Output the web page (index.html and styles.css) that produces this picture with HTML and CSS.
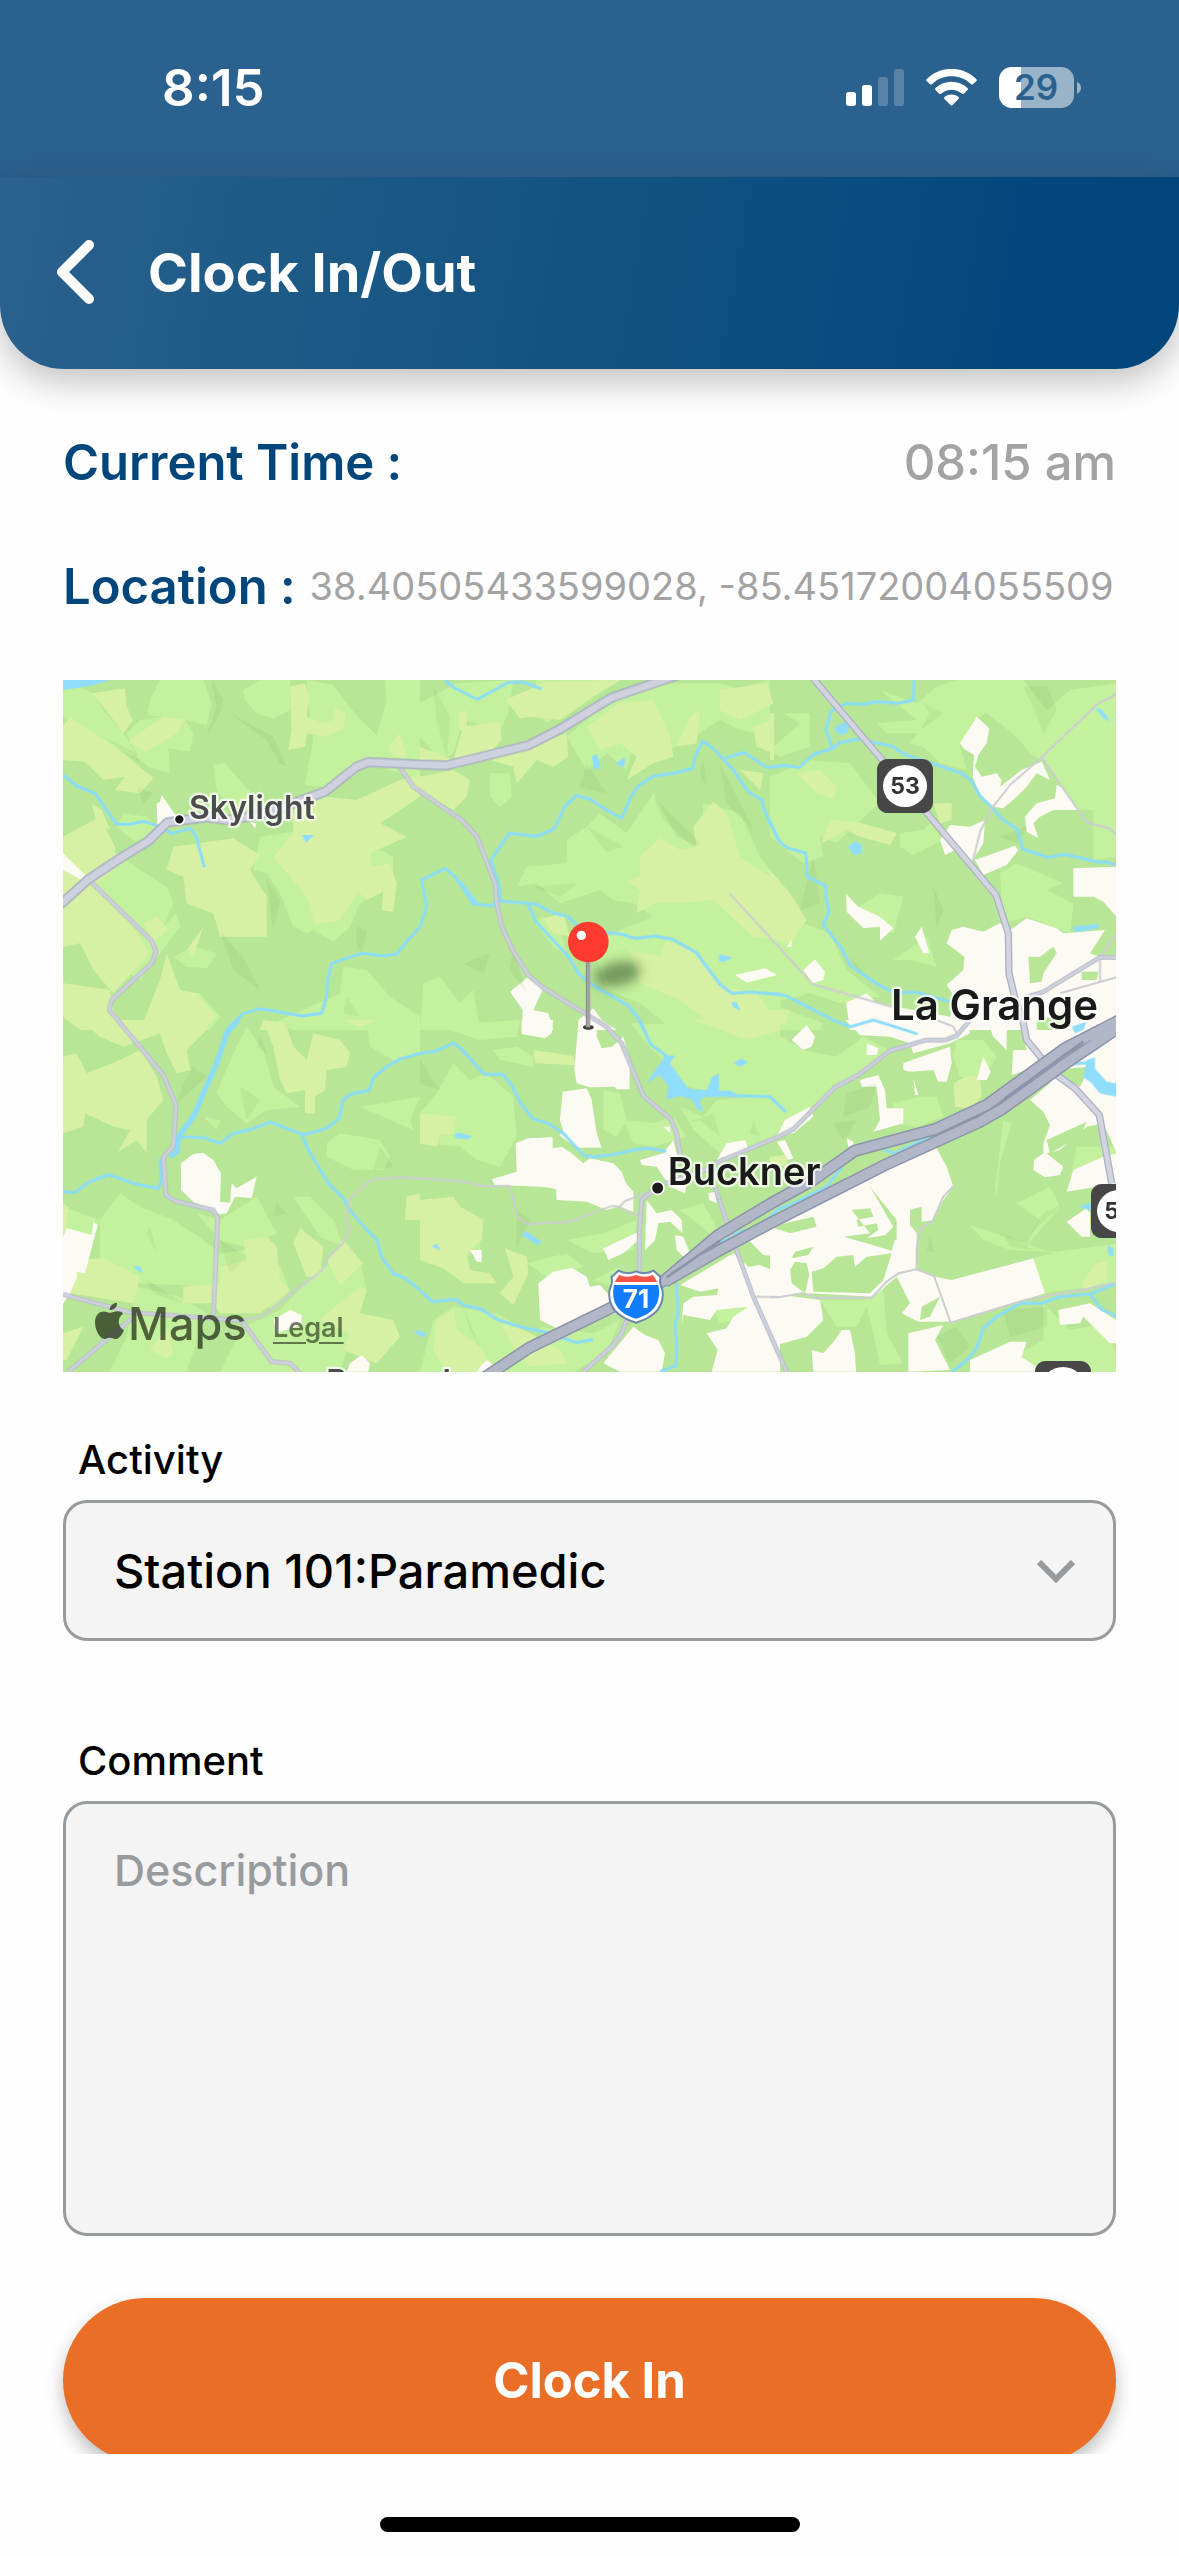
FILE: index.html
```
<!DOCTYPE html>
<html lang="en">
<head>
    <meta charset="UTF-8">
    <meta name="viewport" content="width=device-width, initial-scale=1.0">
    <title>Clock In/Out</title>
    <link rel="stylesheet" href="styles.css">
</head>
<body>
    <div class="app">
        <div class="status-bar">
            <span class="status-time">8:15</span>
            <div class="status-icons">
                <svg class="icon-signal" viewBox="78 57 174 111" fill="#fff" aria-hidden="true">
                    <rect x="78" y="126" width="30" height="42" rx="8"/>
                    <rect x="126" y="105" width="30" height="63" rx="8"/>
                    <rect x="174" y="81" width="30" height="87" rx="8" opacity=".22"/>
                    <rect x="222" y="57" width="30" height="111" rx="8" opacity=".22"/>
                </svg>
                <svg class="icon-wifi" viewBox="318 57 152 111" fill="#fff" aria-hidden="true">
                    <path d="M319 88C360 46 428 46 469 88Q471 91 469 93L458 103Q455 105 452 102C420 71 368 71 336 102Q333 105 330 103L319 93Q317 91 319 88Z"/>
                    <path d="M346 114C373 89 415 89 442 114Q445 117 442 120L431 131Q428 133 425 131C407 115 381 115 363 131Q360 133 357 131L346 120Q343 117 346 114Z"/>
                    <path d="M373 141C385 131 403 131 415 141Q418 144 415 147L397 165Q394 168 391 165L373 147Q370 144 373 141Z"/>
                </svg>
                <svg class="icon-battery" viewBox="537 51 246 123" aria-label="Battery 29%">
                    <defs>
                        <linearGradient id="charge">
                            <stop offset=".29" stop-color="#fff"/>
                            <stop offset=".29" stop-color="#fff" stop-opacity=".52"/>
                        </linearGradient>
                    </defs>
                    <rect x="537" y="51" width="225" height="123" rx="38" fill="url(#charge)"/>
                    <path d="M771 95Q783 101 783 113T771 131Z" fill="#fff" opacity=".52"/>
                    <text class="battery-text" x="648" y="150">29</text>
                </svg>
            </div>
        </div>

        <header class="header">
            <button class="back" type="button" aria-label="Back">
                <svg viewBox="0 0 38 64" fill="none" stroke="#fff" stroke-width="10" stroke-linecap="round" stroke-linejoin="round">
                    <path d="M33 5L6 32L33 59"/>
                </svg>
            </button>
            <h1 class="title">Clock In/Out</h1>
        </header>

        <main class="content">
            <div class="row">
                <span class="row-label">Current Time :</span>
                <span class="row-time">08:15 am</span>
            </div>
            <div class="row">
                <span class="row-label">Location :</span>
                <span class="row-coords">38.40505433599028, -85.45172004055509</span>
            </div>

            <div class="map">
                <svg class="map-canvas" viewBox="0 0 3159 2076" preserveAspectRatio="xMidYMid slice" role="img" aria-label="Map around Buckner">
                    <defs>
                        <filter id="soft" x="-50%" y="-100%" width="200%" height="300%"><feGaussianBlur stdDeviation="18"/></filter>
                        <g id="route-sign">
                            <rect width="168" height="162" rx="32" fill="#474747"/>
                            <ellipse cx="84" cy="81" rx="66" ry="63" fill="#fff"/>
                        </g>
                    </defs>
                    <rect width="3159" height="2076" fill="#b8e697"/>

                    <!-- fields, every layer is drawn as 3 x 2 tiles -->
                    <g class="light">
                        <path transform="translate(-9 -30)" d="M300 30L270 90L262 135L310 140L240 150L200 190L240 270L265 290L330 310L325 235L390 245L400 190L375 150L440 165L455 100L430 30ZM550 60L600 30H690V120L640 145L590 130L555 90ZM740 30L820 45L860 100L950 195L980 90L975 30H1080V330L960 290L930 270L880 320L790 350L735 345L760 210L750 140ZM460 285L495 280L520 310L585 380L520 420L470 360ZM9 60L60 50L100 70L130 120L200 200L240 270L200 250L100 200L9 140ZM100 520L160 540L240 600L320 650L340 700L360 770L300 850L240 930L160 880L60 700ZM600 500L800 470L920 520L1000 560L990 700L960 660L900 700L870 770L820 815L760 780L740 790L700 770L660 670L620 610L580 600ZM340 860L400 830L470 850L440 895L380 890ZM850 890L920 900L990 980L1080 1040V1080H700L640 1060L840 970ZM350 970L420 970L480 1040L450 1080H350ZM190 430L260 440L290 470L230 520L170 470Z"/>
                        <path transform="translate(1071 -30)" d="M110 40L280 30L270 100L260 140L240 180L130 150L100 250L60 270L0 200V100ZM350 30H560L440 120L380 160L340 110ZM600 90L740 40L900 40L1040 80L1060 200L960 180L900 150L820 200L750 240L700 130L560 170L640 230L620 300L560 250L500 300L440 200L520 130ZM210 310L270 310L275 380L240 412L210 380ZM440 510L500 470L540 430L620 490L700 370L770 500L840 530L850 400L960 430L1020 560L1080 640V1080H760L660 1000L560 960L520 830L600 780L700 740L640 700L580 690L540 660L420 700L350 640L290 650L320 590L440 580ZM930 60L1050 30V170L990 180ZM370 740L420 770L440 860L400 830L340 750ZM10 940L60 920L120 1000L160 960L180 1080H0Z"/>
                        <path transform="translate(2121 -30)" d="M0 240L90 160L40 130L120 130L120 230L30 260ZM330 60L440 100L500 50L560 30L580 130L520 190L350 190L320 160L440 150ZM560 30H760L830 120L900 60L1038 40V560L970 570V420L920 420L830 280L780 250L740 200L650 130L610 150L570 230L590 300L510 280L460 230L420 220ZM0 320L120 270L240 280L330 400L260 460L200 520L150 500L160 560L100 580L0 500ZM390 490L460 480L520 510L430 555L390 530ZM250 720L330 670L400 680L370 790L280 760ZM690 610L740 580L880 640L830 660L910 700L900 790L770 740L700 760ZM0 740L100 760L180 790L230 900L330 980L210 1000L120 970L0 1000ZM460 480L520 510L480 460ZM370 870L470 800L500 890L420 870ZM0 1000L160 1060L150 1080H0Z"/>
                        <path transform="translate(-9 1020)" d="M470 220L520 100L560 20L610 90L640 200L720 260L620 270L560 310L500 260ZM800 370L840 340L960 360L990 410L970 450L880 450L800 410ZM920 0H1080V100L1000 120L930 80ZM120 600L180 520L240 560L340 600L430 660L480 700L560 690L660 740L690 810L640 860L560 870L480 800L230 790L120 720ZM410 580L480 600L590 530L650 640L550 680L480 660ZM700 530L750 530L820 600L850 680L780 650ZM9 560L120 600L60 770L9 800ZM660 870L780 740L900 720L920 810L840 1055H480L550 920L620 890ZM230 800L360 830L440 880L380 1055H150L200 950ZM430 290L480 300L470 330ZM900 260L1080 230L1050 300L1060 330Z"/>
                        <path transform="translate(1071 1020)" d="M50 220L100 130L150 180L200 160L280 230L290 350L240 440L170 420L120 380L0 370V280ZM220 90L290 80L340 110L340 140L240 120ZM630 10L1080 20V230L900 220L800 200L740 130L690 80ZM0 30L160 10L300 0L290 50L180 60L90 30ZM610 300L700 310L760 290L800 350L700 380L640 370ZM780 260L850 290L890 240L1000 230L1080 240V340L1010 380L900 400L820 330ZM550 210L600 220L620 300L590 350L550 330ZM780 570L850 550L900 640L880 650L820 600ZM440 660L550 640L650 600L640 690L520 700ZM320 730L440 700L490 740L380 770ZM520 780L600 740L580 800ZM40 900L100 860L230 880L350 950L440 1055H0ZM360 920L520 940L600 900L560 1000L460 1055H400ZM880 870L985 860L960 900L900 910ZM40 560L180 590L180 690L60 740L0 690V550Z"/>
                        <path transform="translate(2121 1020)" d="M0 30L100 90L200 110L280 50L360 92L260 165L190 200L70 327L0 350ZM370 250L450 230L500 230L520 290L440 320L370 310ZM560 60L640 60L680 110L640 180L570 170L550 110ZM600 615L640 660L720 690L860 695L1040 670V790L820 820L790 715L850 700ZM280 820L340 800L350 940L400 1030L330 1035L310 940ZM820 850L900 930L1000 910L1038 1000V1055H800L750 1000L820 960ZM620 790L690 770L720 800ZM700 300L725 310L690 430L680 530L675 500ZM840 500L870 560L760 690L810 600L740 550ZM150 840L300 840L260 920L200 920ZM920 380L1038 380V430L900 490Z"/>
                    </g>
                    <g class="yellow">
                        <path transform="translate(-9 -30)" d="M95 70L195 55L200 110L218 150L190 190L130 110ZM30 140L190 250L280 325L240 370L165 360L195 320L130 330L75 275L9 270V170ZM210 210L310 140L375 150L350 190L260 245L210 220ZM690 50L735 40L748 80L740 140L790 160L820 150L825 115L858 130L850 175L800 200L740 190L735 230L685 240L695 180ZM985 230L1020 190L1042 265L1000 260ZM700 420L800 380L890 390L1020 330L1080 310V380L960 460L1040 500L930 550L935 590L990 580L1010 640L1000 725L965 720L970 665L920 690L895 665L840 750L765 765L740 680L640 560L700 490ZM340 530L520 505L600 555L570 600L620 680L620 800L480 800L460 730L380 700L370 620L320 600ZM9 500L120 440L165 530L165 600L110 640L200 740L270 850L160 970L100 900L60 820L9 830ZM95 400L125 420L150 480L110 460ZM320 850L360 960L410 970L470 1040L430 1080H240L300 930ZM250 760L290 740L325 780L280 815ZM9 940L150 960L160 1020L200 1080H60L9 1040ZM380 840L430 770L400 860ZM610 1050L680 1060L650 1080H600Z"/>
                        <path transform="translate(1071 -30)" d="M255 90L380 35L600 30L520 80L420 150L330 140L300 145ZM0 230L100 270L130 170L240 155L245 210L200 260L70 300L0 270ZM115 130L140 120L140 190L120 180ZM210 270L440 190L445 260L400 290L350 270L290 340L280 290ZM0 320L100 300L150 330L140 380L100 420L0 365ZM500 170L600 100L700 90L750 200L760 260L700 280L620 330L650 260L600 220L540 240ZM810 140L840 120L830 220L770 230ZM1000 170L1060 150V250L1010 230ZM820 470L880 395L920 430L960 560L1080 640V810L1000 800L880 690L780 700L700 700L650 730L660 660L620 635L660 620V560L720 505L780 540L830 530ZM370 745L430 730L450 800L400 790ZM630 840L720 860L740 810L830 850L900 950L1010 970L1080 1060V1080H900L780 990L660 940ZM900 60L1040 40L1060 100L960 150L900 120ZM960 300L1030 310L1020 360Z"/>
                        <path transform="translate(2121 -30)" d="M0 130H12V270H0ZM80 310L150 300L200 350L190 385L140 370ZM155 520L180 450L260 455L380 490L360 525L270 500L230 480ZM490 400L545 400V450L510 460ZM0 600L60 670L110 750L60 820L0 810ZM0 1020L60 1020L50 1060L0 1060Z"/>
                        <path transform="translate(-9 1020)" d="M60 0H430L440 30L380 90L390 150L350 160L320 100L300 40L190 80L120 50ZM9 110L50 100L80 160L180 120L240 90L290 170L310 240L260 300V400L230 360L175 395L210 330L160 320L75 280L70 320L9 340ZM610 0L680 20L700 80L740 120L760 40L840 60L870 100L860 140L800 150L795 210L765 230V280H735L735 210L680 220L660 180L640 80ZM40 720L130 715L240 770L220 850L30 820ZM370 800L480 790L480 740L560 720L550 660L620 650L650 680L660 780L690 810L600 880L480 880L460 850L370 850ZM700 670L720 625L790 680L780 770L740 770ZM800 720L850 660L910 730L840 795ZM850 840L900 800L920 810L900 880L1000 900L1020 950L950 1030L850 990L870 940L780 900ZM320 920L340 1000L320 1015L270 990ZM9 550L25 560L20 620L9 640ZM1040 530L1080 520V600H1035ZM9 940L70 920L20 1020L9 1020ZM850 0H950L900 20Z"/>
                        <path transform="translate(1071 1020)" d="M340 90L460 108L465 135L345 130ZM0 280L110 290L100 340L60 345L50 380L0 370ZM0 540L100 530L120 560L190 600L185 660L140 700L150 750L210 760L230 790L130 790L70 745L0 720ZM255 685L320 710L325 760L280 855L240 820L280 770ZM50 900L100 870L110 930L180 980L230 1055H80L40 990ZM240 910L310 930L420 990L440 1030L330 1040L290 1000ZM820 0H1080V30L980 60L880 20Z"/>
                        <path transform="translate(2121 1020)" d="M550 190L590 168L630 172L635 230L600 265L555 260ZM935 790L980 730L1012 722V780L940 810ZM0 410L55 405L50 440L0 430Z"/>
                    </g>

                    <!-- towns and open ground -->
                    <g class="open">
                        <path transform="translate(-9 -30)" d="M290 400L300 395L305 375L350 440L292 465ZM9 550L75 615L65 630L9 600ZM570 455L590 460L585 475Z"/>
                        <path transform="translate(1071 -30)" d="M270 965L325 920L368 960L340 1020L385 1030L400 1080H305L308 1020ZM475 1080L475 1050L520 1015L545 1050L590 1080ZM945 915L1035 895L1070 915L980 938Z"/>
                        <path transform="translate(2121 -30)" d="M570 220L620 140L658 175L650 220L625 255L615 290L635 320L680 310L695 330L690 350L755 300L815 275L840 330L800 310L770 350L740 380L700 415L670 410L630 375L608 320L612 255L580 235ZM860 345L880 355L925 420L850 420L810 440L790 460L805 505L770 485L765 440L800 400L855 385ZM510 510L540 465L600 470L645 450L640 520L605 575L555 540L525 555ZM615 570L735 527L745 540L710 585L640 615ZM910 595L1040 590V740L1000 695L970 680L910 680ZM228 672L265 710L330 740L370 775L330 812V770L280 775L230 725ZM435 800L455 770L478 850H460ZM100 900L135 868L165 905L160 930L128 940ZM530 820L545 780L580 770L640 785L690 760L720 780L770 745L860 775L880 790L1005 780L960 850L1000 865L1040 870V1080H240L228 998L290 970L320 1000L540 1040L560 990L530 945L580 900L583 860ZM50 830L65 810V830ZM0 905L20 915L0 920Z"/>
                        <path transform="translate(-9 1020)" d="M363 430L400 402L430 398L460 420L483 460L480 545L510 548L515 490L530 505L590 470L575 535L525 530L500 580L480 583L400 545L363 510ZM20 625L60 635L95 645L100 605L113 615L75 760L50 755L50 775L30 820L9 852V650ZM640 900L690 870L725 885V915L650 940ZM860 1055L870 1030L905 1005L930 1030L925 1055Z"/>
                        <path transform="translate(1071 1020)" d="M305 0H400L395 40L375 55L305 42ZM475 10L530 5L530 50L545 85L575 80L610 50L630 120L628 208H590L585 200L510 202L470 190L463 150ZM428 215L500 205L515 240L530 340L545 383L480 383L445 365L418 345L430 335L420 300ZM287 370L325 355L398 352L398 385L425 380L455 400L490 430L510 415L580 430L605 455L618 490L640 515V575L595 560L560 570L500 545L410 540L408 507L365 500L225 495L215 478L290 455ZM660 420L730 400L760 360L775 420L760 460L800 490L795 520L750 500L710 440L665 435ZM680 540L710 580L755 570L785 600L788 640L750 605L715 610L705 660L675 690ZM550 685L650 638V665L610 700L565 720ZM355 790L400 755L455 743L500 770L510 800L540 795L580 840L585 880L420 930L360 900ZM550 1030L640 920L675 945L715 960L735 1000L725 1055H600ZM765 645L790 650L810 700L790 710L770 690ZM780 795L890 730L940 700L985 740L1020 735L1080 760V1055H875L893 990L860 940L920 925L940 890L985 860L890 870L870 900L790 885L785 915L790 850L820 830L890 825L895 805L840 815ZM890 420L920 370L975 360L985 385ZM985 660L1080 610V710L1030 705ZM865 520L885 515L890 550L868 540ZM730 320L750 320L750 340ZM150 690L185 690L185 725L170 725ZM180 1040L200 1020L220 1035L200 1055H170Z"/>
                        <path transform="translate(2121 1020)" d="M225 0H600V40L540 70L430 100L420 70L360 50L270 45ZM290 70L325 85L320 105H290ZM400 130L440 115L540 80L545 130L530 185H505L490 150L420 155L400 150ZM620 180L640 110L662 155L650 180ZM270 180L325 165L345 210L350 265L400 265V310L310 335L330 300L320 200L275 200ZM65 60L110 15L135 50L125 80L100 90ZM45 300L120 260L130 290L70 340L20 350ZM20 365L45 360L70 415L55 420ZM230 355L250 365L250 380L235 380ZM650 0H710V90L670 50ZM750 0H1040V400L1000 310L950 320L870 390L830 400L880 440L870 465L825 472L790 450L792 420L820 400V370L840 315L820 275L780 240L840 190L770 150L725 165L730 90L770 90ZM330 450L500 385L530 440L550 500L520 540L490 600L455 605V560L420 570V615L440 640V750L495 770L545 780L790 715L825 820L545 905L445 905L395 880L420 850L380 770L310 830L120 820L0 830V620L200 520L310 470ZM430 175L445 225L435 225ZM910 450L1000 410L1040 400V490L890 515ZM890 605L950 565L960 580V650L935 650ZM0 820L150 840L160 900L110 950L20 975L0 960ZM125 990L160 1000L195 960L215 930L240 930L255 1000L258 1055H130ZM415 940L520 915L495 960L540 1050L415 1055ZM600 1055V1020L720 965L770 965L755 1010L820 1055ZM865 870L960 850L1038 900V970L1020 970L940 890L930 910L870 915Z"/>
                    </g>
                    <g class="wood">
                        <path transform="translate(2121 -30)" d="M775 860L810 860L850 830L860 850L820 910L815 935L780 940ZM935 905L985 905L980 930L935 930ZM800 1050L900 1030L870 1080H800Z"/>
                        <path transform="translate(2121 1020)" d="M245 570L300 565L310 590L260 600L265 620L320 610L325 630L290 655L380 640L365 692L290 670L220 650L300 640ZM125 755L160 745L200 710L250 705L255 740L290 710L365 700L340 780L300 820L130 815ZM60 750L75 725L110 730L118 765L105 820L65 790ZM300 500L380 600L380 660L330 660L370 620ZM840 150L960 140L930 200L870 170ZM455 860L510 830L480 890L450 900ZM75 695L130 680L115 705L65 715ZM0 620L130 590L140 620L60 640ZM830 360L950 305L930 350L840 400Z"/>
                    </g>
                    <!-- hill shading -->
                    <g class="shade">
                        <path transform="translate(-9 -30)" d="M455 30L490 90L480 130L440 200L470 110ZM510 130L640 200L680 290L660 280L620 210ZM130 200L230 250L240 280ZM870 110L960 200L900 150ZM480 780L560 880L600 960L520 900ZM890 770L920 780L905 850L890 820ZM860 980L900 1040L850 1030ZM340 700L310 770L350 730ZM620 630L660 690L640 780ZM230 350L280 370L250 400Z"/>
                        <path transform="translate(1071 -30)" d="M40 50L90 140L80 260L50 150ZM500 280L560 370L480 350ZM700 380L840 520L820 530L730 450ZM850 270L860 350L840 310ZM900 280L1000 480L920 400ZM280 840L320 970L270 900ZM500 470L610 530L560 545ZM130 880L210 850L190 910ZM340 650L470 640L420 680Z"/>
                        <path transform="translate(2121 -30)" d="M760 50L830 50L860 120L820 190L790 110ZM460 100L520 130L450 180L480 130ZM130 560L150 700L90 720ZM490 650L520 720L500 770ZM690 500L770 470L740 520ZM240 860L300 930L260 900Z"/>
                        <path transform="translate(-9 1020)" d="M400 140L440 170L350 250L370 190ZM600 50L620 100L590 80ZM650 550L680 580L640 590ZM480 660L560 710L510 760ZM260 780L370 850L280 820ZM540 200L600 240L560 300ZM270 620L290 700L260 640ZM960 380L1000 440L940 450Z"/>
                        <path transform="translate(1071 1020)" d="M0 120L60 210L0 190ZM130 860L180 980L150 930ZM290 570L330 600L290 680ZM800 310L880 280L900 350L840 300ZM930 620L980 600L940 640ZM1000 300L1020 350L990 340Z"/>
                        <path transform="translate(2121 1020)" d="M230 220L320 190L300 260L220 290ZM700 640L790 690L720 680ZM480 650L495 700L470 690ZM880 550L780 640L820 580ZM700 870L830 860L830 920L720 950ZM190 310L260 300L220 360ZM500 950L560 920L600 980L540 1030Z"/>
                    </g>

                    <!-- creeks, ponds -->
                    <g class="creek">
                        <path transform="translate(-9 -30)" d="M9 315L50 348L105 370L170 463H210L252 454L290 467L335 490L390 475L408 497L433 592M1080 770L1040 815L1010 852L970 858L905 850L815 880L803 930L800 980L785 1030L725 1038L603 1016L550 1030L500 1080"/>
                        <path transform="translate(1071 -30)" d="M75 30L100 52L172 88L265 37H312L365 57M0 770L20 710L5 630L75 595L105 620L160 700L215 708L230 692L348 702L395 727L445 740L480 775L560 787L600 792L648 805L705 798L758 808L828 847L900 943L935 970L990 966L1080 973M240 690L238 650L213 570L268 489L350 499L403 476L435 408L468 377L510 387L560 420L605 445L630 385L652 350L700 318L760 310L818 295L825 260L848 213L880 235L940 300L985 365L1028 392L1030 415L1078 515M915 265L972 247L1040 292L1095 287M325 705L348 755L445 860L475 910L510 940L628 1010L655 1045L672 1080"/>
                        <path transform="translate(2121 -30)" d="M432 30L430 90L385 100L320 95L280 103L230 100L183 123L168 180L188 235M0 292L43 286L87 293L130 253L188 235L210 218L265 207L365 228L408 255L510 288L575 310L605 333L630 378L665 412L700 450L742 478L758 537L833 562L885 553L985 576H1012L1040 587M0 455L28 515L52 533L108 550L112 620L168 648V680L177 725L160 765L215 835L240 885L310 935L370 967H440L540 995M0 970L48 977L200 1055L242 1070L310 1050L443 1092"/>
                        <path transform="translate(-9 1020)" d="M300 415L305 480L295 505L220 490L145 464L90 485L45 517L9 515M355 350L432 353L480 370L520 340L575 328L630 306L725 342H742L800 325L837 295L850 238L875 222L927 211L942 170L985 137L1020 117L1080 100M725 342L745 390L805 490L850 535L870 570L915 625L950 658L965 712L1000 760L1035 775L1080 810"/>
                        <path class="wide" transform="translate(-9 1020)" d="M535 0L500 40L470 130L430 220L400 290L355 350L350 395L330 410"/>
                        <path transform="translate(1071 1020)" d="M658 0L692 73L735 105L740 150L790 213L870 215L930 227L1050 230L1097 275M0 100L48 93L100 69L122 85L193 163H248L275 195L302 250L340 297L385 310L430 340L490 405L520 411L580 404L650 388L692 385L738 395M0 812L38 845L108 838L130 855L183 867L235 900L310 923L380 937L470 968L520 958M768 790L775 870L765 915L770 970L768 1037L720 1055M880 680L960 635L1010 625L1080 565L1110 555L1220 500L1270 435"/>
                        <path transform="translate(2121 1020)" d="M545 1055L590 1022L620 985L640 925L680 890L755 848L815 850L870 830L960 822L1040 790M960 822L995 868L1040 890M340 390L375 400L470 355L640 290M900 132L955 128"/>
                    </g>
                    <g class="pond">
                        <path transform="translate(-9 -30)" d="M9 30H150L90 48L9 60ZM725 495H762L738 518Z"/>
                        <path transform="translate(1071 -30)" d="M515 260L530 252L540 275L538 297H522ZM588 278L615 262L615 285L600 292ZM897 852L938 862L915 875H898ZM933 995L950 997L962 1022L940 1012ZM105 615L130 640L180 705L155 705Z"/>
                        <path transform="translate(2121 -30)" d="M190 175L225 155L240 170L230 190L210 195ZM235 530L255 513L275 525V550L250 555ZM975 115L995 118L1022 155L1000 145ZM910 770L985 762V775L925 785H910Z"/>
                        <path transform="translate(-9 1020)" d="M220 738H240L248 757L235 755ZM1060 938L1080 930V948Z"/>
                        <path transform="translate(1071 1020)" d="M740 105L765 107L750 130L800 200L815 208L860 210L875 172L897 160V212L930 212L965 228L850 232L838 245L852 278L830 265L815 238L780 228L738 238L745 200L720 165L680 190L705 150ZM940 130L965 115L985 128L960 140ZM100 345L115 338L158 348L145 358L110 355ZM303 645L318 633L365 665L355 675ZM35 680L50 670L62 692ZM0 932L20 940L12 952L0 950Z"/>
                        <path transform="translate(2121 1020)" d="M940 172L950 120L975 112L975 145L1010 185L1040 190V230L990 220L960 185ZM905 20L950 5L940 30L915 40ZM925 560L962 548V572ZM1012 675L1030 685V710L1015 705Z"/>
                    </g>

                    <!-- lanes -->
                    <g class="lane">
                        <path transform="translate(1071 -30)" d="M930 672L1080 835L1178 942L1420 1012"/>
                        <path transform="translate(2121 -30)" d="M1040 72L985 100L815 262L720 345L665 415L630 485L608 575M815 262L950 457L1018 475L1040 495M1040 790L990 862V935M870 970L1040 922M500 1050L550 1070L560 1090"/>
                        <path transform="translate(-9 1020)" d="M545 902L608 888L785 752L805 712L850 668L870 632L858 600L868 538L925 485L948 477L1020 472L1080 475"/>
                        <path transform="translate(1071 1020)" d="M0 475L110 482L195 498H270L292 590L322 613L448 605L575 558L598 560L635 583H660M598 560L615 543L690 515M1005 830L1080 832"/>
                        <path transform="translate(2121 1020)" d="M0 832L35 830L95 820L140 833H305L350 785L385 760L440 748V680L455 622L487 605L520 530L550 498M440 748L492 768L542 908L765 840L950 807L1040 787"/>
                    </g>
                    <g class="minor-edge">
                        <path transform="translate(-9 -30)" d="M90 633L275 812L288 845L275 880L155 990L148 1020L310 1215L348 1305L340 1428L310 1462L318 1575L345 1593L460 1620L473 1645L460 1940M9 1873L210 1927L460 1945L545 1952L635 2075L692 2080L720 2110M215 1945L25 2105M1018 290L1060 350L1080 364L1205 450L1250 498L1305 640L1310 700L1325 770L1360 845L1405 915L1445 950L1550 1015L1640 1070L1685 1120L1750 1277L1832 1347L1850 1390L1862 1460"/>
                        <path transform="translate(1071 1020)" d="M715 500L665 540L658 640V760M620 900L605 940L575 980L490 1055M885 500L935 650L1000 830L1100 1055M885 430L1080 348L1120 327L1245 202L1315 165L1410 92L1520 60H1575L1610 47L1650 0M735 490L885 440"/>
                        <path transform="translate(2121 -30)" d="M760 985L820 965L990 862H1040"/>
                    </g>
                    <g class="minor">
                        <path transform="translate(-9 -30)" d="M90 633L275 812L288 845L275 880L155 990L148 1020L310 1215L348 1305L340 1428L310 1462L318 1575L345 1593L460 1620L473 1645L460 1940M9 1873L210 1927L460 1945L545 1952L635 2075L692 2080L720 2110M215 1945L25 2105M1018 290L1060 350L1080 364L1205 450L1250 498L1305 640L1310 700L1325 770L1360 845L1405 915L1445 950L1550 1015L1640 1070L1685 1120L1750 1277L1832 1347L1850 1390L1862 1460"/>
                        <path transform="translate(1071 1020)" d="M715 500L665 540L658 640V760M620 900L605 940L575 980L490 1055M885 500L935 650L1000 830L1100 1055M885 430L1080 348L1120 327L1245 202L1315 165L1410 92L1520 60H1575L1610 47L1650 0M735 490L885 440"/>
                        <path transform="translate(2121 -30)" d="M760 985L820 965L990 862H1040"/>
                    </g>

                    <!-- state routes -->
                    <g transform="translate(-9 -30)">
                        <path class="route-edge" d="M0 705L85 628L180 565L265 513L322 457L440 442L500 450L570 440L650 420L720 392L795 365L890 290L925 276L1080 284L1160 286L1405 226L1495 180L1655 83L1795 35L1870 10"/>
                        <path class="route" d="M0 705L85 628L180 565L265 513L322 457L440 442L500 450L570 440L650 420L720 392L795 365L890 290L925 276L1080 284L1160 286L1405 226L1495 180L1655 83L1795 35L1870 10"/>
                    </g>
                    <g transform="translate(2121 -30)">
                        <path class="spur-edge" d="M125 20L400 345L678 675L715 790L717 910L735 985L758 1050L770 1110L815 1165L860 1215L915 1255L988 1335L1025 1540"/>
                        <path class="spur" d="M125 20L400 345L678 675L715 790L717 910L735 985L758 1050L770 1110L815 1165L860 1215L915 1255L988 1335L1025 1540"/>
                    </g>

                    <!-- interstate -->
                    <g transform="translate(1071 1020)">
                        <path class="freeway-edge" d="M735 785L900 690L1050 610L1395 435L1680 305L1750 265L1930 135L2100 20M190 1075L325 985L570 865L735 780L895 645L1050 552L1180 480L1305 392L1545 328L1700 255L1935 85L2100 0"/>
                        <path class="freeway" d="M735 785L900 690L1050 610L1395 435L1680 305L1750 265L1930 135L2100 20M190 1075L325 985L570 865L735 780L895 645L1050 552L1180 480L1305 392L1545 328L1700 255L1935 85L2100 0"/>
                        <path class="median" d="M740 772L900 662M1755 235L1990 65"/>
                    </g>

                    <!-- places -->
                    <g class="place small">
                        <text x="378" y="416">Skylight</text>
                        <text x="790" y="2138">Brownsboro</text>
                    </g>
                    <text class="place medium" x="1814" y="1516">Buckner</text>
                    <text class="place large" x="2484" y="1020">La Grange</text>
                    <g fill="#1c1c1c" stroke="#fff" stroke-width="5">
                        <circle cx="349" cy="418" r="15"/>
                        <circle cx="1784" cy="1524" r="19"/>
                    </g>

                    <!-- road signs -->
                    <use href="#route-sign" x="2442" y="237"/>
                    <text class="route-number" x="2526" y="342">53</text>
                    <use href="#route-sign" x="3084" y="1512"/>
                    <text class="route-number" x="3168" y="1617">53</text>
                    <use href="#route-sign" x="2916" y="2043"/>
                    <g transform="translate(1071 1020)">
                        <path d="M595 752Q622 766 648 754Q674 766 701 752L722 772Q716 784 728 812C733 862 703 892 648 908C593 892 563 862 568 812Q580 784 574 772Z" fill="#fff" stroke="#6f87ae" stroke-width="6"/>
                        <path d="M597 765Q622 775 648 765Q674 775 699 765L712 786H584Z" fill="#f65349"/>
                        <path d="M582 795H715C725 848 700 882 648 896C596 882 571 848 582 795Z" fill="#127cff"/>
                        <text class="shield-number" x="648" y="863">71</text>
                    </g>

                    <!-- pin -->
                    <ellipse cx="1664" cy="882" rx="70" ry="36" transform="rotate(-12 1664 882)" fill="#28401c" opacity=".5" filter="url(#soft)"/>
                    <ellipse cx="1576" cy="1042" rx="16" ry="7" fill="#3b3b3b"/>
                    <rect x="1569" y="840" width="13" height="202" fill="#a2a4a4"/>
                    <path d="M1570 840V1042" stroke="#858888" stroke-width="3"/>
                    <circle cx="1576" cy="786" r="61" fill="#ff3b2f"/>
                    <circle cx="1555" cy="766" r="14" fill="#fff"/>

                    <!-- attribution -->
                    <g transform="translate(-9 1020)" class="brand">
                        <path d="M150 878C160 878 168 870 184 876Q189 879 188 883C171 894 173 922 192 930C184 950 174 959 163 957C153 952 146 952 136 957C122 960 104 932 105 904C107 876 130 870 142 877Q146 879 150 878ZM149 870C149 857 158 850 171 848C172 861 163 870 149 870Z"/>
                        <text x="204" y="960">Maps</text>
                    </g>
                </svg>
                <a class="legal" href="#legal">Legal</a>
            </div>

            <form class="form">
                <label class="field-label" for="activity">Activity</label>
                <div class="select-wrap">
                    <select class="field select" id="activity">
                        <option>Station 101:Paramedic</option>
                    </select>
                    <svg class="chevron" viewBox="0 0 38 24" fill="none" stroke="#979b9e" stroke-width="6" aria-hidden="true">
                        <path d="M2 2L19 19L36 2"/>
                    </svg>
                </div>
                <label class="field-label" for="comment">Comment</label>
                <textarea class="field textarea" id="comment" placeholder="Description"></textarea>
                <button class="submit" type="button">Clock In</button>
            </form>
        </main>

        <div class="home-area"><div class="home-indicator"></div></div>
    </div>
</body>
</html>
```
FILE: styles.css
```
:root {
    --navy: #00467b;
    --steel: #2b618e;
    --orange: #ea6e25;
    --gray: #a3a3a3;
    --border: #979b9e;
}

* {
    box-sizing: border-box;
    margin: 0;
    padding: 0;
}

body {
    background: #fefefe;
    font-family: Inter, "Liberation Sans", sans-serif;
    color: #000;
}

.app {
    display: flex;
    flex-direction: column;
    height: 100vh;
}

/* status bar */
.status-bar {
    display: flex;
    justify-content: space-between;
    align-items: center;
    height: 177px;
    padding: 0 98px 2px 162px;
    background: var(--steel);
    color: #fff;
    flex-shrink: 0;
}

.status-time {
    font-size: 51px;
    font-weight: 600;
}

.status-icons {
    display: flex;
    align-items: center;
    gap: 22px;
}

.icon-signal {
    width: 58px;
    height: 37px;
}

.icon-wifi {
    width: 51px;
    height: 37px;
}

.icon-battery {
    width: 82px;
    height: 41px;
}

.battery-text {
    font-size: 105px;
    font-weight: 600;
    text-anchor: middle;
    fill: var(--steel);
}

/* header */
.header {
    position: relative;
    z-index: 1;
    display: flex;
    align-items: center;
    gap: 54px;
    height: 192px;
    padding: 0 56px 2px;
    background: linear-gradient(100deg, var(--steel), #1d5a86 25%, #0c4e80 65%, var(--navy) 92%);
    border-radius: 0 0 64px 64px;
    box-shadow: 0 12px 36px rgba(0, 0, 0, 0.25);
    flex-shrink: 0;
}

.back {
    width: 38px;
    height: 64px;
    border: none;
    background: none;
}

.back svg {
    display: block;
    width: 100%;
    height: 100%;
}

.title {
    font-size: 54px;
    font-weight: 700;
    color: #fff;
}

/* content */
.content {
    flex: 1;
    min-height: 0;
    padding: 63px 63px 0;
    overflow: hidden;
}

.row {
    display: flex;
    align-items: center;
    gap: 14px;
    height: 60px;
    margin-bottom: 64px;
    white-space: nowrap;
}

.row-label {
    font-size: 49px;
    font-weight: 600;
    color: var(--navy);
}

.row-time {
    margin-left: auto;
    font-size: 49px;
    font-weight: 500;
    color: var(--gray);
}

.row-coords {
    font-size: 38px;
    color: var(--gray);
}

/* map */
.map {
    position: relative;
    height: 692px;
    overflow: hidden;
}

.map-canvas {
    display: block;
    width: 100%;
    height: 100%;
}

.light { fill: #c4f19d; }
.yellow { fill: #d7f1a4; }
.open { fill: #fcfaf3; }
.wood { fill: #b8e697; }
.shade { fill: #4f7a35; opacity: 0.08; }
.pond { fill: #90ddfb; }

.creek,
.lane,
.minor,
.minor-edge,
.route,
.route-edge,
.spur,
.spur-edge,
.freeway,
.freeway-edge,
.median {
    fill: none;
    stroke-linejoin: round;
}

.creek { stroke: #8bdcf9; stroke-width: 9; }
.creek .wide { stroke-width: 16; }
.lane { stroke: #cccdd1; stroke-width: 6; }
.minor-edge { stroke: #b7bdc9; stroke-width: 14; }
.minor { stroke: #cdd0da; stroke-width: 9; }
.route-edge { stroke: #a8aec1; stroke-width: 30; }
.route { stroke: #cfd1de; stroke-width: 21; }
.spur-edge { stroke: #adb3c4; stroke-width: 22; }
.spur { stroke: #d2d4e0; stroke-width: 14; }
.freeway-edge { stroke: #8c94aa; stroke-width: 37; }
.freeway { stroke: #b2b7c8; stroke-width: 28; }
.median { stroke: #8c94aa; stroke-width: 8; }

.place {
    font-weight: 600;
    fill: #1a1a1a;
    stroke: rgba(255, 255, 255, 0.75);
    stroke-width: 14px;
    stroke-linejoin: round;
    paint-order: stroke;
}

.small { font-size: 96px; fill: #4c4c4c; }
.medium { font-size: 114px; }
.large { font-size: 126px; }

.route-number,
.shield-number {
    font-weight: 700;
    text-anchor: middle;
}

.route-number { font-size: 69px; fill: #333; }
.shield-number { font-size: 78px; fill: #fff; }

.brand {
    font-size: 135px;
    font-weight: 500;
    fill: rgba(32, 42, 20, 0.72);
}

.legal {
    position: absolute;
    left: 210px;
    bottom: 28px;
    font-size: 27px;
    line-height: 33px;
    font-weight: 600;
    color: rgba(32, 42, 20, 0.62);
    text-underline-offset: 5px;
}

/* form */
.form {
    padding-top: 61px;
}

.field-label {
    display: block;
    margin-bottom: 13px;
    padding-left: 15px;
    font-size: 40px;
    font-weight: 500;
    line-height: 54px;
}

.field {
    display: block;
    width: 100%;
    border: 3px solid var(--border);
    border-radius: 24px;
    background: #f4f4f4;
    font-family: inherit;
    color: #000;
}

.select-wrap {
    position: relative;
    margin-bottom: 93px;
}

.select {
    height: 141px;
    padding: 0 96px 0 48px;
    font-size: 47px;
    font-weight: 500;
    appearance: none;
}

.chevron {
    position: absolute;
    right: 41px;
    top: 60px;
    width: 38px;
    height: 24px;
    pointer-events: none;
}

.textarea {
    height: 435px;
    padding: 36px 48px;
    font-size: 43px;
    font-weight: 500;
    line-height: 60px;
    resize: none;
}

.textarea::placeholder {
    color: var(--border);
    opacity: 1;
}

.submit {
    display: block;
    width: 100%;
    height: 165px;
    margin-top: 62px;
    border: none;
    border-radius: 83px;
    background: var(--orange);
    box-shadow: 0 9px 18px rgba(0, 0, 0, 0.25);
    font-family: inherit;
    font-size: 49px;
    font-weight: 700;
    color: #fff;
}

.home-area {
    display: flex;
    justify-content: center;
    align-items: flex-end;
    height: 102px;
    padding-bottom: 24px;
    flex-shrink: 0;
}

.home-indicator {
    width: 420px;
    height: 15px;
    border-radius: 8px;
    background: #000;
}
```
